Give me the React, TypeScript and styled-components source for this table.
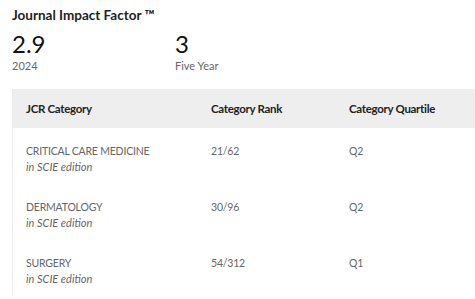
import React from 'react';
import styled, { createGlobalStyle } from 'styled-components';

const GlobalStyle = createGlobalStyle`
  body {
    margin: 0;
    background: #ffffff;
    font-family: Lato, "Liberation Sans", sans-serif;
    overflow: hidden;
  }
`;

const Page = styled.div`
  padding: 4px 0 0 12px;
`;

const Title = styled.h3`
  margin: 0;
  font-size: 13.5px;
  font-weight: 700;
  color: #222;
  line-height: 22px;
`;

const Metrics = styled.div`
  display: flex;
  margin-top: 4px;
`;

const Metric = styled.div<{ $width?: number }>`
  width: ${(p) => (p.$width ? `${p.$width}px` : 'auto')};
  display: flex;
  flex-direction: column;
`;

const MetricValue = styled.span`
  font-size: 24px;
  line-height: 28px;
  color: #111;
  font-weight: 400;
`;

const MetricLabel = styled.span`
  font-size: 11px;
  line-height: 16px;
  color: #666;
`;

const Table = styled.div`
  margin-top: 15px;
  border-left: 1px solid #ececec;
`;

const Row = styled.div<{ $head?: boolean }>`
  display: grid;
  grid-template-columns: 185px 138px 1fr;
  background: ${(p) => (p.$head ? '#eeeeee' : 'transparent')};
  height: ${(p) => (p.$head ? '39px' : '56px')};
  align-items: ${(p) => (p.$head ? 'center' : 'start')};
`;

const HeadCell = styled.div`
  padding-left: 13px;
  font-size: 11.5px;
  letter-spacing: -0.3px;
  font-weight: 700;
  color: #222;
`;

const Cell = styled.div`
  padding: 15px 0 0 13px;
  font-size: 10.5px;
  letter-spacing: -0.2px;
  line-height: 16px;
  color: #666;
`;

const Edition = styled.div`
  font-style: italic;
  font-size: 11px;
  letter-spacing: 0;
`;

const rows = [
  { cat: 'CRITICAL CARE MEDICINE', rank: '21/62', q: 'Q2' },
  { cat: 'DERMATOLOGY', rank: '30/96', q: 'Q2' },
  { cat: 'SURGERY', rank: '54/312', q: 'Q1' },
];

export default function App() {
  return (
    <Page>
      <GlobalStyle />
      <Title>Journal Impact Factor ™</Title>
      <Metrics>
        <Metric $width={163}>
          <MetricValue>2.9</MetricValue>
          <MetricLabel>2024</MetricLabel>
        </Metric>
        <Metric>
          <MetricValue>3</MetricValue>
          <MetricLabel>Five Year</MetricLabel>
        </Metric>
      </Metrics>
      <Table>
        <Row $head>
          <HeadCell>JCR Category</HeadCell>
          <HeadCell>Category Rank</HeadCell>
          <HeadCell>Category Quartile</HeadCell>
        </Row>
        {rows.map((r) => (
          <Row key={r.cat}>
            <Cell>
              {r.cat}
              <Edition>in SCIE edition</Edition>
            </Cell>
            <Cell>{r.rank}</Cell>
            <Cell>{r.q}</Cell>
          </Row>
        ))}
      </Table>
    </Page>
  );
}
